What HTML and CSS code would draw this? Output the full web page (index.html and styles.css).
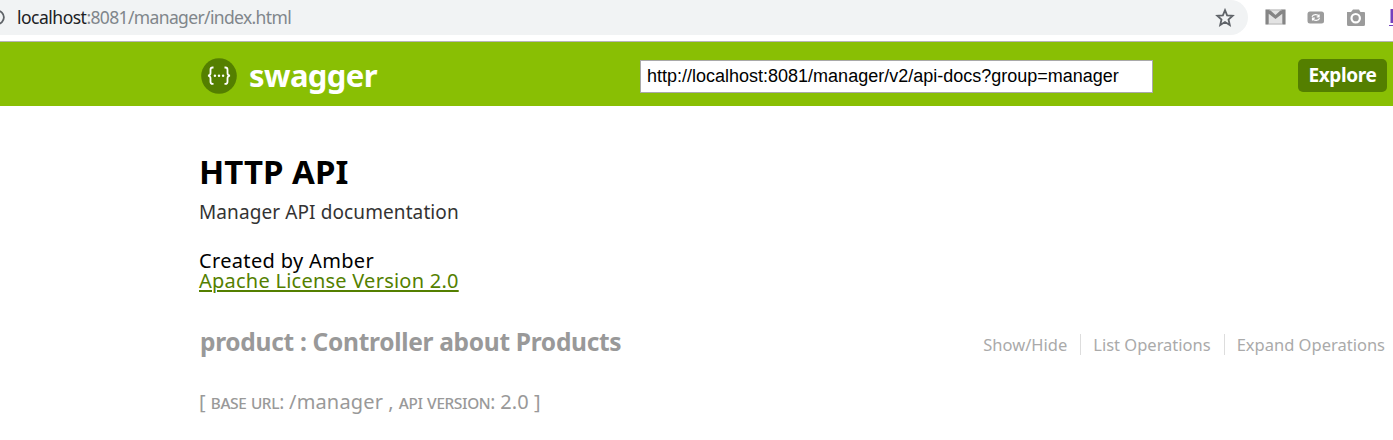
FILE: index.html
```html
<!DOCTYPE html>
<html lang="en">
<head>
<meta charset="utf-8">
<title>Swagger UI</title>
<link rel="stylesheet" href="styles.css">
</head>
<body>
<div class="browser-bar">
  <div class="omnibox">
    <svg class="info-icon" width="6" height="35" viewBox="0 0 6 35"><circle cx="-2.8" cy="17.3" r="6.7" fill="none" stroke="#5f6368" stroke-width="1.8"/></svg>
    <span class="url"><span class="host">localhost</span>:8081/manager/index.html</span>
    <svg class="star" width="20" height="20" viewBox="0 0 20 20"><path d="M10 2.2 12.1 7.3 17.7 7.8 13.5 11.5 14.8 17 10 14.1 5.2 17 6.5 11.5 2.3 7.8 7.9 7.3Z" fill="none" stroke="#5f6368" stroke-width="1.8"/></svg>
  </div>
  <svg class="extensions" width="145" height="35" viewBox="1248 0 145 35">
    <rect x="1265.5" y="9.5" width="20" height="15" fill="#e3e3e3"/>
    <path d="M1265.5 9.5h4l6 5.5 6-5.5h4v15h-3.2v-10.8l-6.8 5.4-6.8-5.4v10.8h-3.2z" fill="#858585"/>
    <path d="M1269 10h13M1269 24h13" stroke="#b7b7b7"/>
    <rect x="1307.5" y="11.5" width="16.5" height="12" rx="2.5" fill="#9c9c9c"/>
    <path d="M1312 16.8c1-2.6 5.6-2.9 7-.3m.1-2v2.4h-2.4M1319.6 18.2c-1 2.7-5.5 3-7 .3m-.1 2v-2.4h2.4" fill="none" stroke="#fff" stroke-width="1.2"/>
    <path d="M1347 12h4l2-2.5h6l1.5 2.5h3.5q1 0 1 1v11.5q0 1.5-1.5 1.5h-15q-1.5 0-1.5-1.5z" fill="#9b9b9b"/>
    <circle cx="1355.7" cy="18.2" r="4.2" fill="#9b9b9b" stroke="#fff" stroke-width="2.2"/>
    <rect x="1390.5" y="9" width="3" height="14" fill="#7440bd"/>
    <path d="M1389 25.5h4" stroke="#7440bd"/>
  </svg>
</div>
<header class="header">
  <a class="logo">
    <svg width="36" height="36" viewBox="0 0 36 36"><circle cx="18" cy="18" r="17.8" fill="#547f00"/><g fill="none" stroke="#fff" stroke-width="1.8"><path d="M12.5 9.5h-.8q-2.2 0-2.2 2.2v3.5q0 2-2.4 2.5 2.4.5 2.4 2.5v3.5q0 2.2 2.2 2.2h.8M23.5 9.5h.8q2.2 0 2.2 2.2v3.5q0 2 2.4 2.5-2.4.5-2.4 2.5v3.5q0 2.2-2.2 2.2h-.8"/></g><g fill="#fff"><circle cx="13.9" cy="17.7" r="1.2"/><circle cx="18" cy="17.7" r="1.2"/><circle cx="22.1" cy="17.7" r="1.2"/></g></svg>
    <span class="logo-title">swagger</span>
  </a>
  <input class="spec-url" type="text" value="http://localhost:8081/manager/v2/api-docs?group=manager">
  <a class="explore"><span class="explore-label">Explore</span></a>
</header>
<main class="content">
  <h1 class="title"><span>HTTP API</span></h1>
  <p class="description"><span>Manager API documentation</span></p>
  <p class="author"><span>Created by Amber</span></p>
  <p class="license"><a>Apache License Version 2.0</a></p>
  <section class="resource">
    <h2 class="resource-name">product : Controller about Products</h2>
    <ul class="options">
      <li class="show">Show/Hide</li>
      <li class="list">List Operations</li>
      <li class="expand">Expand Operations</li>
    </ul>
  </section>
  <footer class="footer">[ <span class="caps">base url:</span> <span class="value">/manager</span> , <span class="caps">api version:</span> <span class="value">2.0</span> ]</footer>
</main>
</body>
</html>
```
FILE: styles.css
```css
* { box-sizing: border-box; margin: 0; padding: 0; }
body { height: 440px; overflow: hidden; background: #fff; font-family: "Noto Sans", sans-serif; white-space: nowrap; }
svg { display: block; flex: none; }
.browser-bar { display: flex; height: 42px; border-bottom: 1px solid #b6b4b6; }
.omnibox { display: flex; align-items: center; width: 1248px; height: 35px; padding-right: 13px; background: #f1f3f4; border-radius: 0 18px 18px 0; }
.url { margin-left: 11px; font: 17.5px/35px "Noto Sans", sans-serif; letter-spacing: -.64px; color: #80868b; }
.host { color: #202124; letter-spacing: -.5px; }
.star { margin-left: auto; }
.header { display: flex; align-items: center; height: 64px; padding: 0 6px 0 201px; background: #89bf04; }
.logo { display: flex; align-items: center; width: 439px; color: #fff; }
.logo svg { margin-top: 3px; }
.logo-title { margin: 2px 0 0 12px; font-size: 31px; line-height: 40px; font-weight: 700; letter-spacing: -.6px; }
.spec-url { width: 513px; height: 33px; margin-top: 5px; padding: 0 6px; border: 1px solid #a9a9a9; background: #fff; color: #000; font: 18px "Liberation Sans", Arial, sans-serif; }
.explore { display: block; width: 89px; height: 33px; margin: 3px 0 0 auto; border-radius: 5px; background: #547f00; color: #fff; font-size: 19px; font-weight: 700; line-height: 32px; letter-spacing: -.35px; text-align: center; }
.content { padding: 45px 8px 0 199px; }
.title { height: 42px; font-size: 33px; line-height: 42px; }
.description { height: 26px; margin-top: 6px; color: #333; font-size: 19px; line-height: 26px; letter-spacing: .1px; }
.author { height: 20px; margin-top: 26px; font-size: 20px; line-height: 20px; letter-spacing: .34px; }
.license { height: 20px; color: #547f00; font-size: 20px; line-height: 20px; letter-spacing: .24px; }
.license a { text-decoration: underline; text-decoration-thickness: 2px; text-underline-offset: 2px; }
.resource { display: flex; align-items: center; justify-content: space-between; height: 36px; margin-top: 33px; color: #999; }
.resource-name { margin-left: 1px; font-size: 24.5px; line-height: 36px; letter-spacing: -.3px; }
.options { display: flex; align-items: center; list-style: none; margin-top: 4px; color: #aaa; font-size: 16.5px; line-height: 21px; }
.options li + li { margin-left: 13px; padding-left: 12px; border-left: 1px solid #ddd; }
.footer { margin-top: 27px; color: #999; font-size: 20px; line-height: 30px; }
.caps { font-variant: small-caps; font-size: 19px; letter-spacing: -.38px; }
.value { letter-spacing: .15px; }
```
